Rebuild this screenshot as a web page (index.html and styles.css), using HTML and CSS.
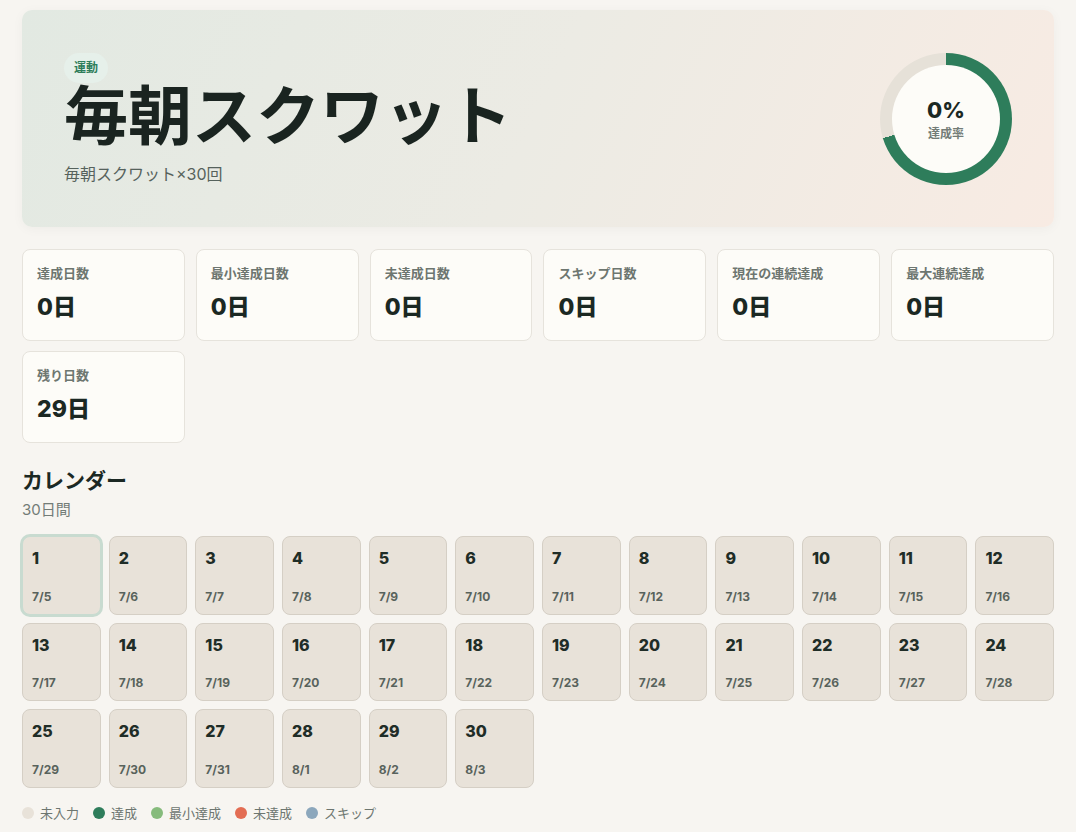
FILE: index.html
```html
<!DOCTYPE html>
<html lang="ja">
<head>
    <meta charset="UTF-8">
    <meta name="viewport" content="width=device-width, initial-scale=1.0">
    <title>毎朝スクワット</title>
    <link rel="stylesheet" href="styles.css">
</head>
<body>
    <main class="page">
        <section class="hero">
            <div class="hero-text">
                <span class="tag">運動</span>
                <h1>毎朝スクワット</h1>
                <p class="subtitle">毎朝スクワット×30回</p>
            </div>
            <div class="ring">
                <div class="ring-inner">
                    <div class="ring-value">0%</div>
                    <div class="ring-label">達成率</div>
                </div>
            </div>
        </section>

        <section class="stats">
            <div class="stat"><div class="stat-label">達成日数</div><div class="stat-value">0日</div></div>
            <div class="stat"><div class="stat-label">最小達成日数</div><div class="stat-value">0日</div></div>
            <div class="stat"><div class="stat-label">未達成日数</div><div class="stat-value">0日</div></div>
            <div class="stat"><div class="stat-label">スキップ日数</div><div class="stat-value">0日</div></div>
            <div class="stat"><div class="stat-label">現在の連続達成</div><div class="stat-value">0日</div></div>
            <div class="stat"><div class="stat-label">最大連続達成</div><div class="stat-value">0日</div></div>
            <div class="stat"><div class="stat-label">残り日数</div><div class="stat-value">29日</div></div>
        </section>

        <section class="calendar">
            <h2>カレンダー</h2>
            <p class="calendar-sub">30日間</p>
            <div class="days" id="days"></div>
            <div class="legend">
                <span class="legend-item"><i class="dot dot-empty"></i>未入力</span>
                <span class="legend-item"><i class="dot dot-done"></i>達成</span>
                <span class="legend-item"><i class="dot dot-min"></i>最小達成</span>
                <span class="legend-item"><i class="dot dot-miss"></i>未達成</span>
                <span class="legend-item"><i class="dot dot-skip"></i>スキップ</span>
            </div>
        </section>
    </main>
    <script>
        const days = document.getElementById('days');
        const start = new Date(2024, 6, 5);

        for (let i = 0; i < 30; i++) {
            const d = new Date(start);
            d.setDate(start.getDate() + i);

            const cell = document.createElement('div');
            cell.className = 'day' + (i === 0 ? ' today' : '');

            const num = document.createElement('div');
            num.className = 'day-num';
            num.textContent = i + 1;

            const date = document.createElement('div');
            date.className = 'day-date';
            date.textContent = (d.getMonth() + 1) + '/' + d.getDate();

            cell.appendChild(num);
            cell.appendChild(date);
            days.appendChild(cell);
        }
    </script>
</body>
</html>
```

FILE: styles.css
```css
body {
    font-family: Inter, "Noto Sans CJK JP", sans-serif;
    margin: 0;
    padding: 0;
    background-color: #f7f5f1;
    color: #1b2823;
}
.page {
    padding: 10px 22px 20px;
}
.hero {
    display: flex;
    align-items: center;
    justify-content: space-between;
    height: 217px;
    box-sizing: border-box;
    padding: 0 42px 0 42px;
    border-radius: 10px;
    background: linear-gradient(115deg, #e2e9e2 0%, #ecebe4 50%, #f8ebe3 100%);
    box-shadow: 0 2px 12px rgba(0, 0, 0, 0.04);
}
.hero-text {
    align-self: flex-start;
    padding-top: 43px;
}
.tag {
    display: inline-block;
    padding: 7px 10px;
    border-radius: 15px;
    background-color: #e6f0ea;
    color: #2e7d5b;
    font-size: 12px;
    font-weight: 700;
    line-height: 16px;
}
.hero h1 {
    margin: 1px 0 0;
    font-size: 64px;
    font-weight: 700;
    line-height: 64px;
    color: #1a2420;
}
.subtitle {
    margin: 13px 0 0;
    font-size: 16px;
    color: #56625c;
}
.ring {
    width: 132px;
    height: 132px;
    border-radius: 50%;
    background: conic-gradient(#2e7d5b 0deg 253deg, #e6e1d8 253deg 360deg);
    display: flex;
    align-items: center;
    justify-content: center;
}
.ring-inner {
    width: 108px;
    height: 108px;
    border-radius: 50%;
    background-color: #fdfcf8;
    display: flex;
    flex-direction: column;
    align-items: center;
    justify-content: center;
}
.ring-value {
    font-size: 22px;
    font-weight: 800;
    line-height: 26px;
}
.ring-label {
    font-size: 12px;
    font-weight: 700;
    color: #737c77;
    margin-top: 1px;
}
.stats {
    display: grid;
    grid-template-columns: repeat(6, 1fr);
    gap: 10px 11px;
    margin-top: 22px;
}
.stat {
    height: 92px;
    box-sizing: border-box;
    padding: 14px 14px;
    background-color: #fdfcf8;
    border: 1px solid #e6e3dc;
    border-radius: 8px;
}
.stat-label {
    font-size: 13px;
    font-weight: 700;
    color: #6d7670;
    line-height: 18px;
}
.stat-value {
    margin-top: 11px;
    font-size: 23px;
    font-weight: 800;
    line-height: 28px;
}
.calendar {
    margin-top: 24px;
}
.calendar h2 {
    margin: 0;
    font-size: 21px;
    font-weight: 700;
    line-height: 28px;
}
.calendar-sub {
    margin: 3px 0 17px;
    font-size: 15px;
    color: #737c77;
}
.days {
    display: grid;
    grid-template-columns: repeat(12, 1fr);
    gap: 8px;
}
.day {
    aspect-ratio: 1;
    box-sizing: border-box;
    padding: 11px 9px 10px;
    display: flex;
    flex-direction: column;
    justify-content: space-between;
    background-color: #e8e2d9;
    border: 1px solid #d5cfc5;
    border-radius: 8px;
}
.day.today {
    border-color: #c8dbd0;
    box-shadow: 0 0 0 2px #c8dbd0;
}
.day-num {
    font-size: 16px;
    font-weight: 800;
    color: #1f2d27;
}
.day-date {
    font-size: 12px;
    font-weight: 700;
    color: #58625c;
}
.legend {
    display: flex;
    gap: 14px;
    margin-top: 15px;
    font-size: 13px;
    color: #6d7670;
}
.legend-item {
    display: flex;
    align-items: center;
    gap: 6px;
}
.dot {
    width: 12px;
    height: 12px;
    border-radius: 50%;
    display: inline-block;
}
.dot-empty { background-color: #e8e2d9; }
.dot-done { background-color: #2e7d5b; }
.dot-min { background-color: #86bb7c; }
.dot-miss { background-color: #e36d53; }
.dot-skip { background-color: #8ca7bc; }
```
